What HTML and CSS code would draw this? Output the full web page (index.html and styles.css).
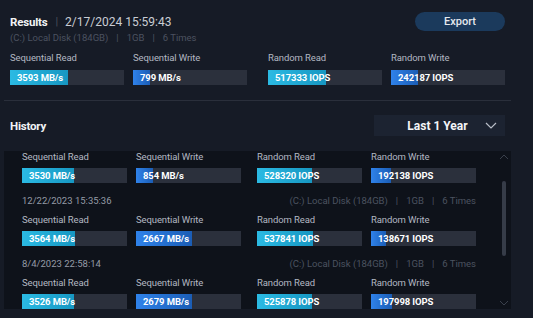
FILE: index.html
```html
<!DOCTYPE html>
<html>
<head>
<meta charset="utf-8">
<link rel="stylesheet" href="styles.css">
</head>
<body>
<div class="app">
  <section class="results">
    <div class="res-head">
      <div class="res-title"><span class="title">Results</span><span class="sep">|</span><span class="stamp">2/17/2024 15:59:43</span></div>
      <button class="export">Export</button>
    </div>
    <div class="info">(C:) Local Disk (184GB)<span class="pipe">|</span>1GB<span class="pipe">|</span>6 Times</div>
    <div class="metrics big">
      <div class="pair">
        <div class="metric"><div class="label">Sequential Read</div><div class="track"><div class="fill read" style="width:51%"></div><span class="val">3593 MB/s</span></div></div>
        <div class="metric"><div class="label">Sequential Write</div><div class="track"><div class="fill write" style="width:15%"></div><span class="val">799 MB/s</span></div></div>
      </div>
      <div class="pair">
        <div class="metric"><div class="label">Random Read</div><div class="track"><div class="fill read" style="width:51%"></div><span class="val">517333 IOPS</span></div></div>
        <div class="metric"><div class="label">Random Write</div><div class="track"><div class="fill write" style="width:24%"></div><span class="val">242187 IOPS</span></div></div>
      </div>
    </div>
  </section>

  <div class="divider"></div>

  <div class="hist-head">
    <span class="title">History</span>
    <div class="dropdown"><span class="dd-text">Last 1 Year</span><svg class="chev" width="12" height="7" viewBox="0 0 12 7"><path d="M1 1 L6 6 L11 1" fill="none" stroke="#b9bec8" stroke-width="1.2"/></svg></div>
  </div>

  <div class="panel">
    <div class="list">
      <div class="entry first">
        <div class="metrics small">
          <div class="pair">
            <div class="metric"><div class="label">Sequential Read</div><div class="track"><div class="fill read" style="width:49.5%"></div><span class="val">3530 MB/s</span></div></div>
            <div class="metric"><div class="label">Sequential Write</div><div class="track"><div class="fill write" style="width:16%"></div><span class="val">854 MB/s</span></div></div>
          </div>
          <div class="pair">
            <div class="metric"><div class="label">Random Read</div><div class="track"><div class="fill read" style="width:52%"></div><span class="val">528320 IOPS</span></div></div>
            <div class="metric"><div class="label">Random Write</div><div class="track"><div class="fill write" style="width:19%"></div><span class="val">192138 IOPS</span></div></div>
          </div>
        </div>
      </div>
      <div class="entry">
        <div class="entry-info"><span class="date">12/22/2023 15:35:36</span><span class="disk">(C:) Local Disk (184GB)<span class="pipe">|</span>1GB<span class="pipe">|</span>6 Times</span></div>
        <div class="metrics small">
          <div class="pair">
            <div class="metric"><div class="label">Sequential Read</div><div class="track"><div class="fill read" style="width:50%"></div><span class="val">3564 MB/s</span></div></div>
            <div class="metric"><div class="label">Sequential Write</div><div class="track"><div class="fill write" style="width:53%"></div><span class="val">2667 MB/s</span></div></div>
          </div>
          <div class="pair">
            <div class="metric"><div class="label">Random Read</div><div class="track"><div class="fill read" style="width:53%"></div><span class="val">537841 IOPS</span></div></div>
            <div class="metric"><div class="label">Random Write</div><div class="track"><div class="fill write" style="width:14%"></div><span class="val">138671 IOPS</span></div></div>
          </div>
        </div>
      </div>
      <div class="entry">
        <div class="entry-info"><span class="date">8/4/2023 22:58:14</span><span class="disk">(C:) Local Disk (184GB)<span class="pipe">|</span>1GB<span class="pipe">|</span>6 Times</span></div>
        <div class="metrics small">
          <div class="pair">
            <div class="metric"><div class="label">Sequential Read</div><div class="track"><div class="fill read" style="width:49.5%"></div><span class="val">3526 MB/s</span></div></div>
            <div class="metric"><div class="label">Sequential Write</div><div class="track"><div class="fill write" style="width:53%"></div><span class="val">2679 MB/s</span></div></div>
          </div>
          <div class="pair">
            <div class="metric"><div class="label">Random Read</div><div class="track"><div class="fill read" style="width:52%"></div><span class="val">525878 IOPS</span></div></div>
            <div class="metric"><div class="label">Random Write</div><div class="track"><div class="fill write" style="width:20%"></div><span class="val">197998 IOPS</span></div></div>
          </div>
        </div>
      </div>
    </div>
    <div class="scrollbar">
      <svg class="arrow up" width="10" height="6" viewBox="0 0 10 6"><path d="M1 5 L5 1 L9 5" fill="none" stroke="#3a404c" stroke-width="1"/></svg>
      <div class="sb-track"><div class="thumb"></div></div>
      <svg class="arrow down" width="10" height="6" viewBox="0 0 10 6"><path d="M1 1 L5 5 L9 1" fill="none" stroke="#3a404c" stroke-width="1"/></svg>
    </div>
  </div>
</div>
</body>
</html>
```
FILE: styles.css
```css
* { box-sizing: border-box; }
html, body { margin: 0; padding: 0; }
body {
  background: #161b26;
  font-family: Roboto, "Noto Sans", sans-serif;
  color: #c3c7cf;
  width: 533px;
  height: 318px;
  overflow: hidden;
}
.app { width: 533px; }

.results { padding: 12px 28px 0 10px; }
.res-head {
  display: flex;
  justify-content: space-between;
  align-items: center;
  height: 19px;
}
.res-title { display: flex; align-items: center; }
.title { font-weight: 700; font-size: 11.5px; color: #f2f3f5; letter-spacing: -0.2px; }
.sep { color: #4a505c; font-size: 11px; margin: 0 7px 0 8px; }
.stamp { font-size: 12px; color: #c9cdd4; }
.export {
  width: 90px;
  height: 19px;
  border: none;
  border-radius: 10px;
  background: #1b3a5c;
  color: #e6e9ee;
  font-family: inherit;
  font-size: 11px;
  font-weight: 500;
  padding: 0;
}
.info {
  height: 14px;
  line-height: 14px;
  font-size: 9.5px;
  color: #4c5260;
  display: flex;
}
.pipe { margin: 0 8px; }

.metrics { display: grid; grid-template-columns: 1fr 1fr; }
.metrics.big { column-gap: 21px; margin-top: 7px; }
.metrics.small { column-gap: 16px; margin-top: 6px; }
.entry.first .metrics.small { margin-top: 0; }
.pair { display: grid; grid-template-columns: 1fr 1fr; column-gap: 9px; }
.label {
  height: 12px;
  line-height: 12px;
  font-size: 9.5px;
  color: #b3b8c2;
  white-space: nowrap;
  letter-spacing: -0.1px;
}
.track {
  position: relative;
  height: 15px;
  background: #2b303c;
  display: flex;
  align-items: center;
}
.big .track { margin-top: 6px; }
.small .track { margin-top: 5px; }
.fill {
  position: absolute;
  left: 0; top: 0; bottom: 0;
}
.fill.read { background: linear-gradient(90deg, #2bbae3, #1797c2); }
.fill.write { background: linear-gradient(90deg, #2f82ea, #1b5db5); }
.val {
  position: relative;
  padding-left: 7px;
  font-size: 9.5px;
  font-weight: 700;
  color: #ffffff;
  letter-spacing: -0.1px;
}

.divider {
  height: 1px;
  background: #2a2f3b;
  margin: 15px 22px 0 4px;
}

.hist-head {
  margin-top: 14px;
  padding: 0 28px 0 10px;
  display: flex;
  justify-content: space-between;
  align-items: center;
  height: 21px;
}
.dropdown {
  width: 131px;
  height: 21px;
  background: #1c2331;
  display: flex;
  align-items: center;
  padding: 0 8px 0 24px;
}
.dd-text { flex: 1; text-align: center; font-weight: 700; font-size: 12px; color: #f4f5f7; margin-right: 8px; }
.chev { display: block; }

.panel {
  position: relative;
  margin: 15px 22px 0 4px;
  height: 158px;
  background: #0e121a;
  overflow: hidden;
  padding: 0 35px 0 18px;
}
.entry { padding-bottom: 11px; }
.entry-info {
  height: 14px;
  line-height: 14px;
  display: flex;
  justify-content: space-between;
  font-size: 9.5px;
}
.date { color: #959ba6; }
.disk { color: #4c5260; display: flex; }

.scrollbar {
  position: absolute;
  right: 0; top: 0; bottom: 0;
  width: 14px;
  display: flex;
  flex-direction: column;
  align-items: center;
  padding: 3px 0 3px 0;
}
.arrow { display: block; }
.sb-track { flex: 1; position: relative; width: 4px; }
.thumb {
  position: absolute;
  left: 0; right: 0;
  top: 21px;
  height: 75px;
  border-radius: 2px;
  background: #363c48;
}
```
